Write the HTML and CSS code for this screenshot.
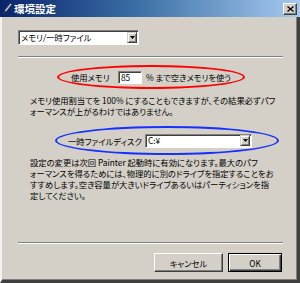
FILE: index.html
```html
<!DOCTYPE html>
<html lang="ja">
<head>
<meta charset="utf-8">
<title>環境設定</title>
<link rel="stylesheet" href="styles.css">
</head>
<body>
<div class="window">
  <div class="titlebar">
    <svg class="appicon" width="9" height="12" viewBox="0 0 9 12">
      <path d="M7.5 0.5 L8.5 1.5 L3 8.5 L1.8 7.5 Z" fill="#e8e8e8" stroke="#606060" stroke-width="0.6"/>
      <path d="M1.8 7.5 L3 8.5 L1 11 L0.6 10.6 Z" fill="#404040"/>
    </svg>
    <span class="title">環境設定</span>
    <span class="close">
      <svg width="7" height="6" viewBox="0 0 7 6"><path d="M0.5 0.5 L6.5 5.5 M6.5 0.5 L0.5 5.5" stroke="#000" stroke-width="1.3"/></svg>
    </span>
  </div>
  <div class="body">
    <div class="select sel-cat">
      <span class="sel-text">メモリ/一時ファイル</span>
      <span class="sel-btn"><svg width="5" height="3" viewBox="0 0 5 3"><path d="M0 0 H5 L2.5 3 Z" fill="#000"/></svg></span>
    </div>
    <div class="sep"></div>
    <div class="ring ring-red">
      <span class="lbl lbl-mem">使用メモリ</span>
      <span class="field">85</span>
      <span class="lbl lbl-after">% まで空きメモリを使う</span>
    </div>
    <p class="note note-mem">メモリ使用割当てを 100% にすることもできますが、その結果必ずパフ<br>ォーマンスが上がるわけではありません。</p>
    <div class="ring ring-blue">
      <span class="lbl lbl-disk">一時ファイルディスク</span>
      <div class="select sel-disk">
        <span class="sel-text">C:¥</span>
        <span class="sel-btn"><svg width="5" height="3" viewBox="0 0 5 3"><path d="M0 0 H5 L2.5 3 Z" fill="#000"/></svg></span>
      </div>
    </div>
    <p class="note note-disk">設定の変更は次回 Painter 起動時に有効になります。最大のパフ<br>ォーマンスを得るためには、物理的に別のドライブを指定することをお<br>すすめします。空き容量が大きいドライブあるいはパーティションを指<br>定してください。</p>
    <div class="sep sep-bottom"></div>
    <div class="buttons">
      <button class="btn btn-cancel">キャンセル</button>
      <button class="btn btn-ok">OK</button>
    </div>
  </div>
</div>
</body>
</html>
```
FILE: styles.css
```css
* { box-sizing: border-box; margin: 0; padding: 0; }
html, body { width: 300px; height: 283px; overflow: hidden; }
body {
  font-family: "Noto Sans CJK JP", "Noto Sans", sans-serif;
  font-size: 8.3px;
  font-feature-settings: "palt";
  color: #000;
  background: #d4d0c8;
}
.window {
  width: 300px;
  height: 283px;
  display: flex;
  flex-direction: column;
}
.titlebar {
  height: 17px;
  flex: none;
  display: flex;
  align-items: center;
  padding: 0 3px 0 3px;
  background: linear-gradient(to right, #0a246a 0%, #3a6ea5 45%, #a6caf0 100%);
}
.appicon { flex: none; }
.title {
  flex: 1;
  margin-left: 2px;
  color: #fff;
  font-weight: bold;
  font-size: 10.5px;
  line-height: 17px;
}
.close {
  width: 14px;
  height: 12px;
  display: flex;
  align-items: center;
  justify-content: center;
  background: #d4d0c8;
  border: 1px solid;
  border-color: #fff #404040 #404040 #fff;
  box-shadow: inset -1px -1px #808080;
}
.body {
  flex: 1;
  display: flex;
  flex-direction: column;
  border-left: 2px solid #f4f2ee;
  border-right: 3px solid #404040;
  border-bottom: 3px solid #404040;
  box-shadow: inset -1px -1px #808080;
  padding: 13px 14px 8px 16px;
}
.select {
  height: 15px;
  display: flex;
  align-items: center;
  background: #fff;
  border: 1px solid;
  border-color: #808080 #fff #fff #808080;
  box-shadow: inset 1px 1px #404040;
  padding: 1px 1px 1px 2px;
}
.sel-text { flex: 1; white-space: nowrap; line-height: 11px; }
.sel-btn {
  width: 10px;
  height: 11px;
  display: flex;
  align-items: center;
  justify-content: center;
  background: #d4d0c8;
  border: 1px solid;
  border-color: #d4d0c8 #404040 #404040 #d4d0c8;
  box-shadow: inset 1px 1px #fff, inset -1px -1px #808080;
}
.sel-cat { width: 121px; }
.sep {
  height: 2px;
  margin-top: 11px;
  border-top: 1px solid #808080;
  border-bottom: 1px solid #fff;
}
.ring {
  display: flex;
  align-items: center;
  border-radius: 50%;
  border: 2px solid;
}
.ring-red {
  margin-top: 7px;
  margin-left: 39px;
  width: 188px;
  height: 24px;
  border-color: #f00;
  padding-left: 12px;
}
.ring-blue {
  margin-top: 9px;
  margin-left: 37px;
  width: 224px;
  height: 29px;
  border-color: #1530ff;
  padding-left: 11px;
}
.lbl { white-space: nowrap; }
.lbl-mem { width: 47px; }
.lbl-after { margin-left: 4px; }
.lbl-disk { width: 77px; }
.field {
  width: 24px;
  height: 13px;
  background: #fff;
  border: 1px solid;
  border-color: #808080 #fff #fff #808080;
  box-shadow: inset 1px 1px #404040;
  padding-left: 2px;
  line-height: 11px;
}
.sel-disk { width: 107px; height: 14px; }
.note {
  white-space: nowrap;
  line-height: 11px;
  margin-left: 12px;
}
.note-mem { margin-top: 6px; }
.note-disk { margin-top: 2px; }
.sep-bottom { margin-top: auto; margin-bottom: 9px; }
.buttons {
  display: flex;
  justify-content: flex-end;
  gap: 5px;
  padding-right: 1px;
}
.btn {
  height: 19px;
  font-family: inherit;
  font-size: 8.3px;
  font-feature-settings: "palt";
  color: #000;
  background: #d4d0c8;
  border: 1px solid;
  border-color: #fff #404040 #404040 #fff;
  box-shadow: inset -1px -1px #808080;
}
.btn-cancel { width: 69px; }
.btn-ok {
  width: 54px;
  border: 1px solid #000;
  box-shadow: inset 1px 1px #fff, inset -1px -1px #404040, inset -2px -2px #808080;
}
```
